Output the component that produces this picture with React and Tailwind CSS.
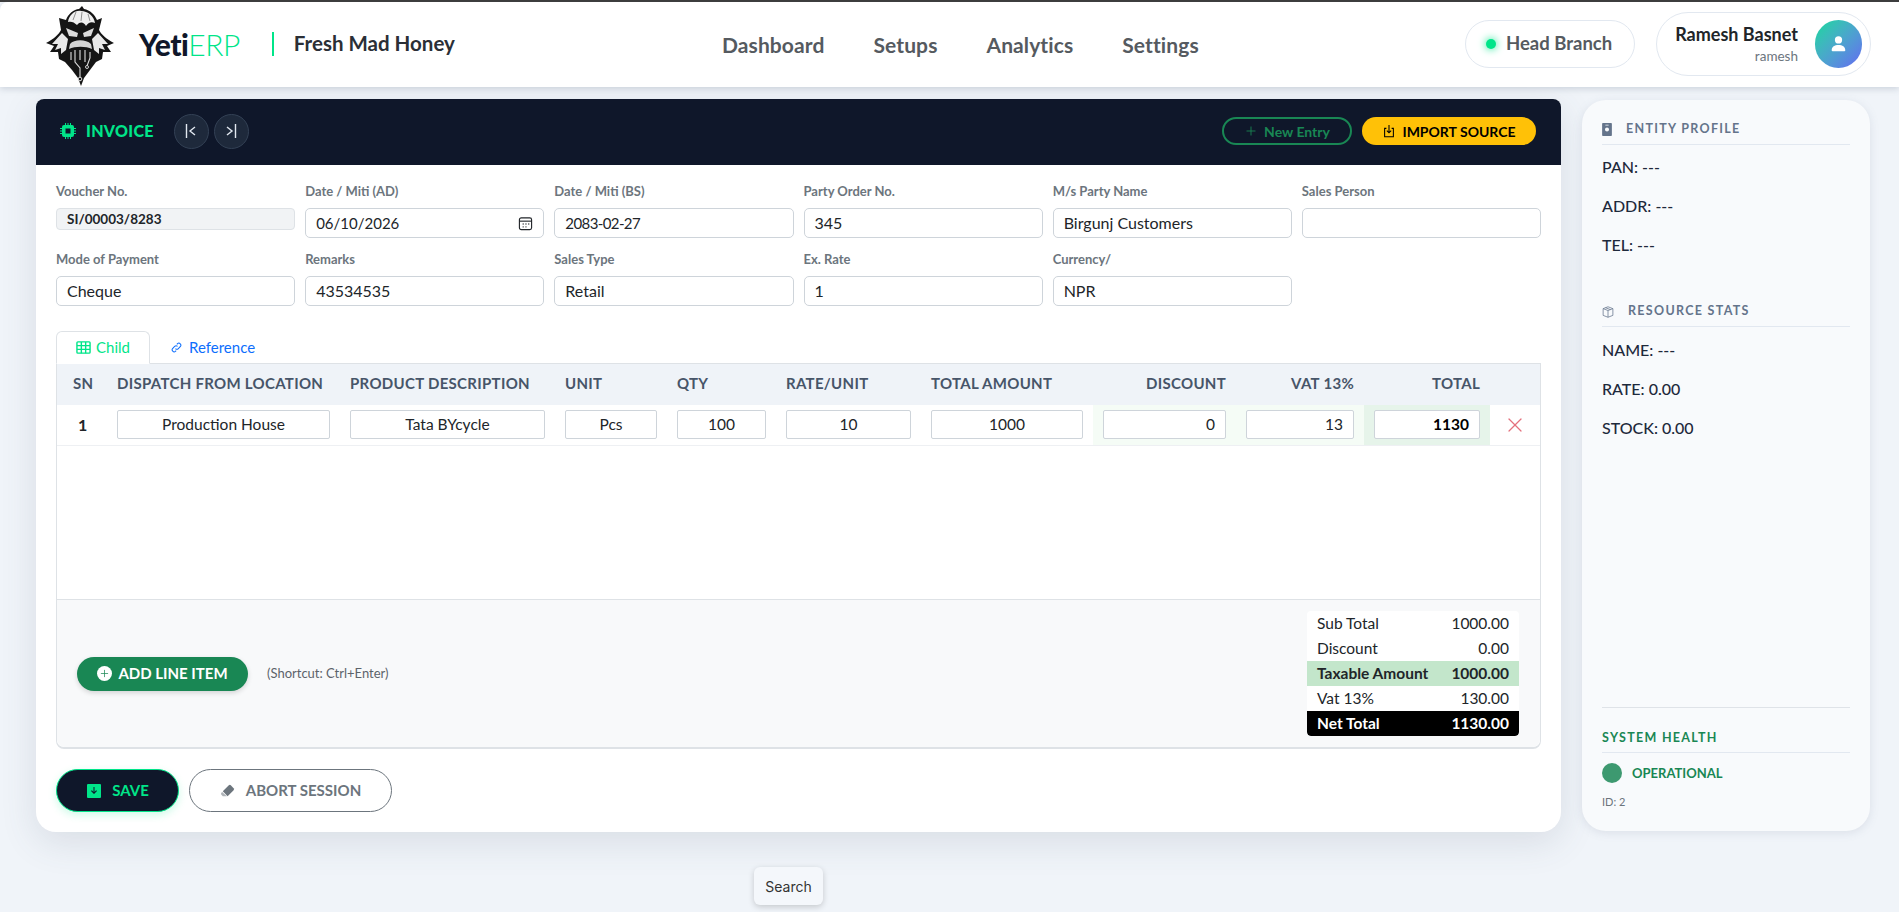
import React from "react";
import { Plus, X } from "lucide-react";

const rowOne = [
  { label: "Date / Miti (AD)", value: "06/10/2026", calendar: true, cls: "text-[15px]" },
  { label: "Date / Miti (BS)", value: "2083-02-27", cls: "text-[15px] tracking-[-0.6px]" },
  { label: "Party Order No.", value: "345" },
  { label: "M/s Party Name", value: "Birgunj Customers" },
  { label: "Sales Person", value: "" },
];

const rowTwo = [
  { label: "Mode of Payment", value: "Cheque" },
  { label: "Remarks", value: "43534535" },
  { label: "Sales Type", value: "Retail" },
  { label: "Ex. Rate", value: "1" },
  { label: "Currency/", value: "NPR" },
];

const totals = [
  { name: "Sub Total", value: "1000.00", cls: "bg-white text-[#212529]" },
  { name: "Discount", value: "0.00", cls: "bg-white text-[#212529]" },
  { name: "Taxable Amount", value: "1000.00", cls: "bg-[#c3e6cb] text-[#212529] font-bold" },
  { name: "Vat 13%", value: "130.00", cls: "bg-white text-[#212529]" },
  { name: "Net Total", value: "1130.00", cls: "bg-black text-white font-bold rounded-b-[4px]" },
];

const YetiLogo = () => (
  <svg viewBox="0 0 68 80" className="w-[68px] h-[80px]">
    <path d="M36 0 L38 3 C44 4 49 9 51 14 L56 12 L53 24 C55 28 60 33 68 37 L61 40 L65 46 L57 46 L56 53 L50 56 L44 64 L38 72 L35 80 L32 72 L26 64 L19 56 L13 53 L12 46 L4 46 L8 40 L0 37 C8 33 13 28 15 24 L13 12 L20 14 C22 8 28 3 33 3 Z" fill="#151515" />
    <path d="M22 16 C23 9 29 4 35 5 C42 5 48 10 49 17 C45 15 42 17 40 20 C38 16 34 15 31 19 C28 16 25 15 22 16 Z" fill="#efefef" />
    <path d="M30 6 L27 14 M36 6 L35 15 M42 8 L44 15" stroke="#777" strokeWidth="0.8" fill="none" />
    <path d="M16 27 L6 38 L12 38 L9 44 L15 42 L15 48 L20 44 L22 33 Z M52 27 L62 38 L56 38 L59 44 L53 42 L53 48 L48 44 L46 33 Z" fill="#e9e9e9" />
    <path d="M20 22 L32 27 L31 31 L23 30 Z M48 22 L37 27 L38 31 L45 30 Z" fill="#dcdcdc" />
    <path d="M24 38 C28 33 40 33 45 38 L46 43 C40 40 29 40 23 43 Z" fill="#d4d4d4" />
    <path d="M25 46 V54 M29 44 V56 L34 62 V72 M34 44 V54 M39 44 V56 M44 46 V52 L41 60" stroke="#dedede" strokeWidth="1.1" fill="none" />
    <circle cx="34" cy="73" r="1.8" fill="#151515" stroke="#dedede" strokeWidth="1" />
    <circle cx="41" cy="61" r="1.5" fill="#151515" stroke="#dedede" strokeWidth="0.9" />
  </svg>
);

const Field = ({ label, value, calendar, readOnly, cls = "text-[16px]" }) => (
  <div>
    <div className="h-[17px] mb-[8px] text-[13px] leading-[17px] font-bold text-[#6c757d]">{label}</div>
    {readOnly ? (
      <div className="h-[22px] px-[10px] flex items-center bg-[#f1f3f5] border border-[#dee2e6] rounded-[4px] text-[13.5px] font-bold text-[#212529]">
        {value}
      </div>
    ) : (
      <div className={`h-[30px] px-[10px] flex items-center justify-between bg-white border border-[#ced4da] rounded-[5px] text-[#212529] ${cls}`}>
        <span>{value}</span>
        {calendar && (
          <svg viewBox="0 0 16 16" className="w-[15px] h-[15px] text-[#212529]" fill="none" stroke="currentColor" strokeWidth="1.2">
            <rect x="1.5" y="2" width="13" height="12.5" rx="2" />
            <path d="M1.5 5.5h13" />
            <path d="M5 8.5h1M8 8.5h1M11 8.5h1M5 11.5h1M8 11.5h1" strokeWidth="1.4" />
          </svg>
        )}
      </div>
    )}
  </div>
);

const CellInput = ({ value, align = "text-center", cls = "" }) => (
  <div className={`h-[29px] leading-[27px] px-[10px] bg-white border border-[#ced4da] rounded-[2px] text-[15.5px] text-[#212529] ${align} ${cls}`}>
    {value}
  </div>
);

const Heading = ({ icon, children }) => (
  <div className="flex items-center gap-[14px] h-[25px] pb-[5px] border-b border-[#e2e8f0] text-[12.5px] font-bold tracking-[1.3px] text-[#64748b]">
    {icon}
    {children}
  </div>
);

const Line = ({ children }) => (
  <div className="h-[39px] leading-[39px] text-[16px] font-medium text-[#1e293b]">{children}</div>
);

export default function App() {
  return (
    <div className="relative min-h-[912px] overflow-hidden bg-[#f0f4f9] font-['Lato','Open_Sans',sans-serif]">
      <div className="h-[2px] bg-[#3c3c3c]" />
      <header className="h-[85px] flex items-center bg-white rounded-tl-[8px] shadow-[0_2px_6px_rgba(100,116,139,0.25)] relative z-10">
        <div className="ml-[46px] w-[68px] mt-[3px]">
          <YetiLogo />
        </div>
        <div className="ml-[25px] -mt-[2px] text-[30px] leading-none tracking-[-0.5px] font-black text-[#0f172a]">
          Yeti<span className="font-light text-[#00e589]">ERP</span>
        </div>
        <div className="ml-[32px] -mt-[2px] w-[2px] h-[24px] bg-[#00e589]" />
        <div className="ml-[20px] -mt-[2px] text-[20.5px] font-bold text-[#2b2f36]">Fresh Mad Honey</div>
        <nav className="absolute left-[722px] top-[28px] flex gap-[49px] text-[21px] leading-[30px] tracking-[0.1px] font-bold text-[#555a60]">
          <span>Dashboard</span>
          <span>Setups</span>
          <span>Analytics</span>
          <span>Settings</span>
        </nav>
        <div className="ml-auto mr-[21px] -mt-[2px] flex items-center w-[170px] h-[48px] pl-[20px] gap-[10px] bg-white border border-[#e2e8f0] rounded-full">
          <span className="w-[10px] h-[10px] rounded-full bg-[#00e589] shadow-[0_0_8px_#00e589]" />
          <span className="text-[18.5px] font-bold text-[#555a60]">Head Branch</span>
        </div>
        <div className="mr-[28px] -mt-[2px] flex items-center justify-end w-[215px] h-[64px] pr-[8px] gap-[17px] bg-white border border-[#e2e8f0] rounded-full">
          <div className="text-right">
            <div className="text-[18px] leading-[24px] font-bold text-[#212529]">Ramesh Basnet</div>
            <div className="text-[13.5px] leading-[20px] text-[#6c757d]">ramesh</div>
          </div>
          <div className="w-[47px] h-[48px] rounded-full flex items-center justify-center bg-gradient-to-br from-[#00d99a] to-[#6366f1]">
            <svg viewBox="0 0 16 16" className="w-[17px] h-[17px]" fill="white">
              <circle cx="8" cy="4.6" r="3.4" />
              <path d="M1.6 14.5c0-3.4 2.8-5 6.4-5s6.4 1.6 6.4 5c0 .5-.4.8-.9.8H2.5c-.5 0-.9-.3-.9-.8z" />
            </svg>
          </div>
        </div>
      </header>

      <main className="flex items-start pl-[36px] pt-[12px]">
        <section className="w-[1525px] h-[733px] bg-white rounded-b-[20px] rounded-t-[8px] shadow-[0_10px_36px_rgba(71,85,105,0.14)]">
          <div className="h-[66px] flex items-center bg-[#0f172a] rounded-t-[8px] pl-[24px] pr-[25px] pb-[2px]">
            <svg viewBox="0 0 16 16" className="w-[16px] h-[16px] text-[#00e589]" fill="currentColor">
              <path d="M5 0h1v2H5zM7.5 0h1v2h-1zM10 0h1v2h-1zM5 14h1v2H5zM7.5 14h1v2h-1zM10 14h1v2h-1zM0 5h2v1H0zM0 7.5h2v1H0zM0 10h2v1H0zM14 5h2v1h-2zM14 7.5h2v1h-2zM14 10h2v1h-2z" />
              <path fillRule="evenodd" d="M4 2h8a2 2 0 0 1 2 2v8a2 2 0 0 1-2 2H4a2 2 0 0 1-2-2V4a2 2 0 0 1 2-2zm1.5 3.5v5h5v-5z" />
            </svg>
            <span className="ml-[10px] text-[16px] font-black tracking-[0.3px] text-[#00e589]">INVOICE</span>
            <div className="ml-[20px] flex gap-[5px]">
              <button className="w-[35px] h-[35px] flex items-center justify-center rounded-full bg-[#1e293b] border border-[#334155]">
                <svg viewBox="0 0 16 16" className="w-[16px] h-[16px]" fill="none" stroke="#e2e8f0" strokeWidth="1.4">
                  <path d="M3.5 1v14M12 4L7 8l5 4" />
                </svg>
              </button>
              <button className="w-[35px] h-[35px] flex items-center justify-center rounded-full bg-[#1e293b] border border-[#334155]">
                <svg viewBox="0 0 16 16" className="w-[16px] h-[16px]" fill="none" stroke="#e2e8f0" strokeWidth="1.4">
                  <path d="M12.5 1v14M4 4l5 4-5 4" />
                </svg>
              </button>
            </div>
            <button className="ml-auto w-[130px] h-[28px] flex items-center justify-center gap-[6px] rounded-full border-2 border-[#198754] text-[14px] font-bold text-[#198754]">
              <Plus size={14} strokeWidth={1.5} />
              New Entry
            </button>
            <button className="ml-[10px] w-[174px] h-[28px] flex items-center justify-center gap-[6px] rounded-full bg-[#ffc107] text-[14px] font-bold text-black">
              <svg viewBox="0 0 16 16" className="w-[14px] h-[14px]" fill="none" stroke="black" strokeWidth="1.2">
                <path d="M5 5H3v9.5h10V5h-2" />
                <path d="M8 1v9M5.5 7.5L8 10l2.5-2.5" />
              </svg>
              IMPORT SOURCE
            </button>
          </div>

          <div className="px-[20px] pt-[18px]">
            <div className="grid grid-cols-6 gap-x-[10px] gap-y-[13px]">
              <Field label="Voucher No." value="SI/00003/8283" readOnly />
              {rowOne.map((f) => (
                <Field key={f.label} {...f} />
              ))}
              {rowTwo.map((f) => (
                <Field key={f.label} {...f} />
              ))}
            </div>

            <div className="mt-[25px] flex h-[33px]">
              <div className="w-[94px] h-[33px] flex items-center justify-center gap-[5px] bg-white border border-[#dee2e6] border-b-white rounded-t-[6px] relative z-10 text-[15px] text-[#00e589]">
                <svg viewBox="0 0 16 16" className="w-[15px] h-[15px]" fill="none" stroke="currentColor" strokeWidth="1.5">
                  <rect x="1" y="2" width="14" height="12" rx="1" />
                  <path d="M1 6h14M1 10h14M5.7 2v12M10.3 2v12" />
                </svg>
                Child
              </div>
              <div className="ml-[21px] h-[33px] flex items-center gap-[7px] text-[15px] text-[#0d6efd]">
                <svg viewBox="0 0 16 16" className="w-[11px] h-[11px]" fill="none" stroke="currentColor" strokeWidth="1.5">
                  <path d="M6.5 9.5a3 3 0 0 0 4.2 0l3-3a3 3 0 0 0-4.2-4.2l-1 1" />
                  <path d="M9.5 6.5a3 3 0 0 0-4.2 0l-3 3a3 3 0 0 0 4.2 4.2l1-1" />
                </svg>
                Reference
              </div>
            </div>

            <div className="-mt-px h-[386px] flex flex-col border border-[#dee2e6] rounded-b-[8px] border-b-2">
              <div className="h-[235px] bg-white">
                <table className="w-full table-fixed border-collapse">
                  <colgroup>
                    <col className="w-[50px]" />
                    <col className="w-[233px]" />
                    <col className="w-[215px]" />
                    <col className="w-[112px]" />
                    <col className="w-[109px]" />
                    <col className="w-[145px]" />
                    <col className="w-[172px]" />
                    <col className="w-[143px]" />
                    <col className="w-[128px]" />
                    <col className="w-[126px]" />
                    <col />
                  </colgroup>
                  <thead>
                    <tr className="h-[41px] bg-[#eff3f8] text-[15px] font-bold tracking-[0.3px] text-[#475569]">
                      <th className="px-[10px] pl-[16px] pb-[3px] text-left font-bold">SN</th>
                      <th className="px-[10px] pb-[3px] text-left font-bold whitespace-nowrap">DISPATCH FROM LOCATION</th>
                      <th className="px-[10px] pb-[3px] text-left font-bold whitespace-nowrap">PRODUCT DESCRIPTION</th>
                      <th className="px-[10px] pb-[3px] text-left font-bold">UNIT</th>
                      <th className="px-[10px] pb-[3px] text-left font-bold">QTY</th>
                      <th className="px-[10px] pb-[3px] text-left font-bold">RATE/UNIT</th>
                      <th className="px-[10px] pb-[3px] text-left font-bold whitespace-nowrap">TOTAL AMOUNT</th>
                      <th className="px-[10px] pb-[3px] text-right font-bold">DISCOUNT</th>
                      <th className="px-[10px] pb-[3px] text-right font-bold">VAT 13%</th>
                      <th className="px-[10px] pb-[3px] text-right font-bold">TOTAL</th>
                      <th />
                    </tr>
                  </thead>
                  <tbody>
                    <tr className="h-[40px] border-b border-[#eef0f3]">
                      <td className="pl-[21px] text-[16px] font-bold text-[#212529]">1</td>
                      <td className="px-[10px]"><CellInput value="Production House" /></td>
                      <td className="px-[10px]"><CellInput value="Tata BYcycle" /></td>
                      <td className="px-[10px]"><CellInput value="Pcs" /></td>
                      <td className="px-[10px]"><CellInput value="100" /></td>
                      <td className="px-[10px]"><CellInput value="10" /></td>
                      <td className="px-[10px]"><CellInput value="1000" /></td>
                      <td className="px-[10px] bg-[#f5fcf6]"><CellInput value="0" align="text-right" /></td>
                      <td className="px-[10px] bg-[#f5fcf6]"><CellInput value="13" align="text-right" /></td>
                      <td className="px-[10px] bg-[#e6f4ea]"><CellInput value="1130" align="text-right" cls="font-bold text-black" /></td>
                      <td className="pl-[13px]"><X size={24} strokeWidth={1.2} className="text-[#e4717d]" /></td>
                    </tr>
                  </tbody>
                </table>
              </div>

              <div className="flex-1 flex items-center justify-between pl-[20px] pr-[21px] bg-[#f8f9fa] border-t border-[#dee2e6] rounded-b-[8px]">
                <div className="flex items-center">
                  <button className="w-[171px] h-[34px] flex items-center justify-center gap-[6px] rounded-full bg-[#198754] text-[15px] font-bold text-white shadow-[0_2px_5px_rgba(0,0,0,0.15)]">
                    <span className="w-[15px] h-[15px] rounded-full bg-white flex items-center justify-center">
                      <Plus size={11} strokeWidth={1.6} className="text-[#198754]" />
                    </span>
                    ADD LINE ITEM
                  </button>
                  <span className="ml-[19px] text-[13px] text-[#5c636a]">(Shortcut: Ctrl+Enter)</span>
                </div>
                <div className="w-[212px] rounded-[4px] overflow-hidden">
                  {totals.map((t) => (
                    <div key={t.name} className={`h-[25px] px-[10px] flex items-center justify-between text-[15.5px] ${t.cls}`}>
                      <span>{t.name}</span>
                      <span>{t.value}</span>
                    </div>
                  ))}
                </div>
              </div>
            </div>

            <div className="mt-[20px] flex gap-[10px]">
              <button className="w-[123px] h-[43px] flex items-center justify-center gap-[10px] rounded-full bg-[#0f172a] border border-[#00e589] text-[15px] font-bold text-[#00e589] shadow-[0_3px_8px_rgba(0,229,137,0.2)]">
                <svg viewBox="0 0 16 16" className="w-[16px] h-[16px]" fill="currentColor">
                  <path fillRule="evenodd" d="M2 1h12a1 1 0 0 1 1 1v12a1 1 0 0 1-1 1H2a1 1 0 0 1-1-1V2a1 1 0 0 1 1-1zm5.5 3v5L5.8 7.3l-.8.8L8 11l3-2.9-.8-.8L8.5 9V4z" />
                </svg>
                SAVE
              </button>
              <button className="w-[203px] h-[43px] flex items-center justify-center gap-[11px] rounded-full bg-white border border-[#6c757d] text-[15px] font-bold text-[#6c757d]">
                <svg viewBox="0 0 16 16" className="w-[15px] h-[15px]" fill="currentColor">
                  <path d="M8.1 14l6.4-6.4a1.5 1.5 0 0 0 0-2.1l-3-3a1.5 1.5 0 0 0-2.1 0L3 8.9z" />
                  <path d="M2.3 9.6l-.8.8a1.5 1.5 0 0 0 0 2.1L3 14h4.4z" opacity="0.55" />
                </svg>
                ABORT SESSION
              </button>
            </div>
          </div>
        </section>

        <aside className="ml-[21px] w-[288px] h-[731px] mt-[1px] flex flex-col px-[20px] pt-[20px] pb-[21px] bg-[#f8fafc] rounded-[24px] shadow-[0_2px_10px_rgba(100,116,139,0.15)]">
          <Heading
            icon={
              <svg viewBox="0 0 12 16" className="w-[10px] h-[13px] text-[#64748b]" fill="currentColor">
                <path fillRule="evenodd" d="M1 0h10a1 1 0 0 1 1 1v14a1 1 0 0 1-1 1H1a1 1 0 0 1-1-1V1a1 1 0 0 1 1-1zm3 2v1h4V2zm2 3.5a2.5 2.5 0 1 0 0 5 2.5 2.5 0 0 0 0-5z" />
              </svg>
            }
          >
            ENTITY PROFILE
          </Heading>
          <div className="mt-[2px]">
            <Line>PAN: ---</Line>
            <Line>ADDR: ---</Line>
            <Line>TEL: ---</Line>
          </div>
          <div className="mt-[38px]">
            <Heading
              icon={
                <svg viewBox="0 0 16 16" className="w-[12px] h-[12px] text-[#64748b]" fill="none" stroke="currentColor" strokeWidth="1">
                  <path d="M8 1l6.5 2.5v9L8 15l-6.5-2.5v-9zM1.5 3.5L8 6l6.5-2.5M8 6v9M4.7 2.3l6.6 2.5" />
                </svg>
              }
            >
              RESOURCE STATS
            </Heading>
          </div>
          <div className="mt-[3px]">
            <Line>NAME: ---</Line>
            <Line>RATE: 0.00</Line>
            <Line>STOCK: 0.00</Line>
          </div>
          <div className="mt-auto pt-[22px] border-t border-[#dfe3e8]">
            <div className="h-[23px] pb-[6px] border-b border-[#e2e8f0] text-[12.5px] leading-[16px] font-bold tracking-[1.3px] text-[#198754]">SYSTEM HEALTH</div>
            <div className="mt-[10px] flex items-center gap-[10px]">
              <span className="w-[20px] h-[20px] rounded-full bg-[#3d9970]" />
              <span className="text-[13px] font-bold text-[#198754] pt-[1px]">OPERATIONAL</span>
            </div>
            <div className="mt-[11px] text-[11px] leading-[16px] text-[#6c757d]">ID: 2</div>
          </div>
        </aside>
      </main>

      <button className="absolute left-[754px] top-[867px] w-[69px] h-[38px] bg-[#f4f7fb] rounded-[6px] font-['Inter',sans-serif] text-[14px] text-[#333] shadow-[0_2px_6px_rgba(0,0,0,0.18)]">
        Search
      </button>
    </div>
  );
}
